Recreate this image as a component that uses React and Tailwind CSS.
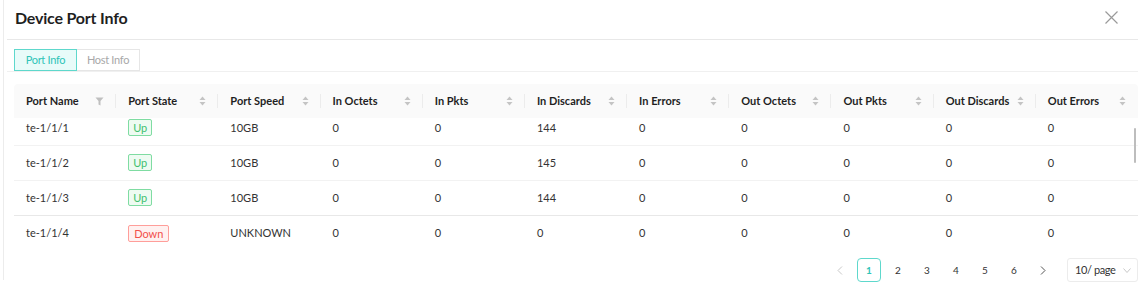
import React from 'react';

const columns = [
  'Port Name', 'Port State', 'Port Speed', 'In Octets', 'In Pkts', 'In Discards',
  'In Errors', 'Out Octets', 'Out Pkts', 'Out Discards', 'Out Errors',
];

const rows = [
  { name: 'te-1/1/1', up: true, speed: '10GB', inDiscards: '144' },
  { name: 'te-1/1/2', up: true, speed: '10GB', inDiscards: '145' },
  { name: 'te-1/1/3', up: true, speed: '10GB', inDiscards: '144' },
  { name: 'te-1/1/4', up: false, speed: 'UNKNOWN', inDiscards: '0' },
];

const SortIcon = () => (
  <svg width="7" height="10" viewBox="0 0 7 10" className="shrink-0">
    <path d="M3.5 0.5 L6.5 4 L0.5 4 Z" fill="#c4c4c4" />
    <path d="M3.5 9.5 L6.5 6 L0.5 6 Z" fill="#c4c4c4" />
  </svg>
);

const FilterIcon = () => (
  <svg width="9" height="9" viewBox="0 0 9 9" className="shrink-0">
    <path d="M0.5 0.5 H8.5 L5.5 4 V8.5 L3.5 7.5 V4 Z" fill="#bfbfbf" />
  </svg>
);

const Tag = ({ up }) =>
  up ? (
    <span className="inline-flex items-center h-[17px] px-[4px] text-[11px] leading-none border border-[#7fdca2] bg-[#eefbf2] text-[#3fc06f] rounded-[2px]">
      Up
    </span>
  ) : (
    <span className="inline-flex items-center h-[17px] px-[5px] text-[11px] leading-none border border-[#ff9e9a] bg-[#fff1f0] text-[#f2504b] rounded-[2px]">
      Down
    </span>
  );

const App = () => {
  return (
    <div className="w-[1146px] h-[297px] bg-white font-['Lato',sans-serif] text-[#333]">
      <div className="ml-[3px] h-[280px] border-l border-[#ececec] pl-[3px]">
        <div className="w-[1131px]">
          {/* Title */}
          <div className="h-[40px] flex items-center justify-between pl-[8px] pr-[20px] border-b border-[#e8e8e8]">
            <h1 className="text-[16px] font-bold text-[#1f1f1f] -mt-[4px] tracking-[-0.2px]">Device Port Info</h1>
            <svg width="13" height="13" viewBox="0 0 13 13" className="-mt-[4px]">
              <path d="M0.5 0.5 L12.5 12.5 M12.5 0.5 L0.5 12.5" stroke="#9a9a9a" strokeWidth="1.2" />
            </svg>
          </div>

          {/* Tabs */}
          <div className="pt-[9px] pl-[7px] border-b border-[#f0f0f0] flex">
            <div className="w-[63px] h-[22px] flex items-center justify-center text-[11px] tracking-[-0.3px] border border-[#5ed8cc] bg-[#e8fbf9] text-[#2fc4b8]">
              Port Info
            </div>
            <div className="w-[63px] h-[22px] flex items-center justify-center text-[11px] tracking-[-0.3px] border border-l-0 border-[#e6e6e6] text-[#a8a8a8]">
              Host Info
            </div>
          </div>

          {/* Table */}
          <div className="ml-[7px] mt-[12px] w-[1124px]">
            <div className="grid grid-cols-11 h-[34px] bg-[#fafafa] rounded-t-[4px]">
              {columns.map((c, i) => (
                <div key={c} className="relative flex items-center justify-between pl-[12px] pr-[12px]">
                  <span className="text-[11px] font-bold text-[#1f1f1f]">{c}</span>
                  {i === 0 ? <FilterIcon /> : <SortIcon />}
                  {i < columns.length - 1 && (
                    <span className="absolute right-0 top-[10px] h-[14px] w-px bg-[#ececec]" />
                  )}
                </div>
              ))}
            </div>

            <div className="relative h-[132px] overflow-hidden">
              <div className="-mt-[7px]">
                {rows.map((r, idx) => (
                  <div
                    key={r.name}
                    className={`grid grid-cols-11 h-[35px] items-center text-[11px] ${
                      idx === 2 ? 'border-b border-[#e8e8e8]' : idx < 3 ? 'border-b border-[#f2f2f2]' : ''
                    }`}
                  >
                    <div className="pl-[12px]">{r.name}</div>
                    <div className="pl-[12px]"><Tag up={r.up} /></div>
                    <div className="pl-[12px]">{r.speed}</div>
                    <div className="pl-[12px]">0</div>
                    <div className="pl-[12px]">0</div>
                    <div className="pl-[12px]">{r.inDiscards}</div>
                    <div className="pl-[12px]">0</div>
                    <div className="pl-[12px]">0</div>
                    <div className="pl-[12px]">0</div>
                    <div className="pl-[12px]">0</div>
                    <div className="pl-[12px]">0</div>
                  </div>
                ))}
              </div>
              <span className="absolute right-[2px] top-[10px] w-[2px] h-[35px] bg-[#bdbdbd] rounded" />
            </div>
          </div>

          {/* Pagination */}
          <div className="mt-[8px] flex justify-end items-center gap-[5px]">
            <div className="w-[24px] h-[24px] flex items-center justify-center">
              <svg width="6" height="9" viewBox="0 0 6 9"><path d="M5 0.5 L1 4.5 L5 8.5" fill="none" stroke="#c8c8c8" strokeWidth="1" /></svg>
            </div>
            <div className="w-[24px] h-[24px] flex items-center justify-center border border-[#5ed8cc] rounded-[4px] text-[10px] font-bold text-[#2fc4b8]">1</div>
            {['2', '3', '4', '5', '6'].map((p) => (
              <div key={p} className="w-[24px] h-[24px] flex items-center justify-center text-[10px] text-[#333]">{p}</div>
            ))}
            <div className="w-[24px] h-[24px] flex items-center justify-center">
              <svg width="6" height="9" viewBox="0 0 6 9"><path d="M1 0.5 L5 4.5 L1 8.5" fill="none" stroke="#555" strokeWidth="1" /></svg>
            </div>
            <div className="ml-[7px] w-[71px] h-[24px] flex items-center justify-between pl-[7px] pr-[6px] border border-[#ececec] rounded-[3px] text-[11px] text-[#333] whitespace-nowrap">
              <span className="tracking-[-0.4px]">10/ page</span>
              <svg width="8" height="5" viewBox="0 0 8 5" className="shrink-0"><path d="M0.5 0.5 L4 4.5 L7.5 0.5" fill="none" stroke="#c8c8c8" strokeWidth="1" /></svg>
            </div>
          </div>
        </div>
      </div>
    </div>
  );
};

export default App;
